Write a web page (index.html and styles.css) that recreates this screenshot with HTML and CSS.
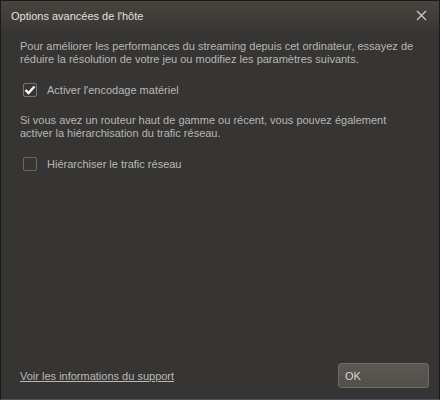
FILE: index.html
```html
<!DOCTYPE html>
<html lang="fr">
<head>
<meta charset="utf-8">
<link rel="stylesheet" href="styles.css">
</head>
<body>
<div class="window">
  <div class="titlebar">
    <span class="title">Options avancées de l'hôte</span>
    <svg class="close" width="11" height="11" viewBox="0 0 11 11"><path d="M1 1L10 10M10 1L1 10" stroke="#c8c6c4" stroke-width="1.4" fill="none"/></svg>
  </div>
  <div class="content">
    <p class="text">Pour améliorer les performances du streaming depuis cet ordinateur, essayez de réduire la résolution de votre jeu ou modifiez les paramètres suivants.</p>
    <label class="check">
      <span class="box checked"><svg width="12" height="10" viewBox="0 0 12 10"><path d="M1.5 5L4.5 8L10.5 1.5" stroke="#fff" stroke-width="2.4" fill="none"/></svg></span>
      <span>Activer l'encodage matériel</span>
    </label>
    <p class="text">Si vous avez un routeur haut de gamme ou récent, vous pouvez également activer la hiérarchisation du trafic réseau.</p>
    <label class="check">
      <span class="box"></span>
      <span>Hiérarchiser le trafic réseau</span>
    </label>
    <div class="spacer"></div>
    <div class="footer">
      <a class="link" href="#">Voir les informations du support</a>
      <button class="ok">OK</button>
    </div>
  </div>
</div>
</body>
</html>
```
FILE: styles.css
```css
html, body { margin: 0; padding: 0; background: #1c1c1c; }
body { width: 440px; height: 400px; font-family: "Liberation Sans", Arial, sans-serif; }
.window {
  box-sizing: border-box;
  width: 440px; height: 400px;
  border: 1px solid #1b1b1b;
  border-bottom-color: #4b5263;
  background: #363533;
  display: flex; flex-direction: column;
}
.titlebar {
  height: 29px;
  background: linear-gradient(#48443f, #3a3836);
  display: flex; align-items: center; justify-content: space-between;
  padding: 0 12px 0 10px;
}
.title { color: #e2e0de; font-size: 11px; }
.close { display: block; }
.content {
  flex: 1;
  display: flex; flex-direction: column;
  padding: 10px 10px 11px 19px;
  color: #b8b6b4;
  font-size: 11px;
}
.text { margin: 0; line-height: 13px; max-width: 396px; }
.check { display: flex; align-items: center; gap: 10px; margin: 17px 0 17px 3px; font-size: 11px; color: #bab8b6; }
.box {
  box-sizing: border-box; width: 14px; height: 14px;
  border: 1px solid #6c6864; border-radius: 2px;
  display: flex; align-items: center; justify-content: center;
  background: #363533;
}
.box.checked { border-color: #7a7672; }
.spacer { flex: 1; }
.footer { display: flex; justify-content: space-between; align-items: center; }
.link { color: #bab8b6; font-size: 11px; text-decoration: underline; }
.ok {
  box-sizing: border-box; width: 91px; height: 25px;
  border: 1px solid #6f6b67; border-radius: 3px;
  background: linear-gradient(#5c5854, #524e4a);
  color: #d8d6d4; font-family: "Liberation Sans", Arial, sans-serif; font-size: 11px;
  text-align: left; padding: 0 0 0 6px;
}
```
